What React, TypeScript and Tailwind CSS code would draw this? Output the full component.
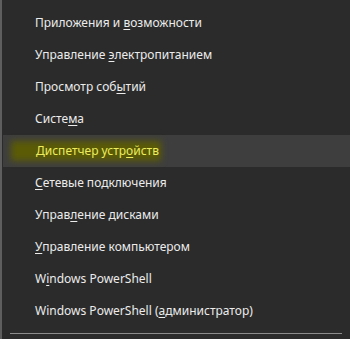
const items: { pre: string; key: string; post: string; active?: boolean }[] = [
  { pre: 'Приложения и ', key: 'в', post: 'озможности' },
  { pre: 'Управление ', key: 'э', post: 'лектропитанием' },
  { pre: 'Просмотр соб', key: 'ы', post: 'тий' },
  { pre: 'Систе', key: 'м', post: 'а' },
  { pre: 'Диспетчер устр', key: 'о', post: 'йств', active: true },
  { pre: '', key: 'С', post: 'етевые подключения' },
  { pre: 'Управ', key: 'л', post: 'ение дисками' },
  { pre: '', key: 'У', post: 'правление компьютером' },
  { pre: 'W', key: 'i', post: 'ndows PowerShell' },
  { pre: 'Windows PowerShell (', key: 'а', post: 'дминистратор)' },
];

export default function App() {
  return (
    <div className="w-[350px] h-[339px] bg-[#2b2b2b] border-l-2 border-[#5e5e5e] pt-[7px] overflow-hidden font-['Noto_Sans',sans-serif] text-[12px]">
      {items.map((it, i) => (
        <div
          key={i}
          className={
            'relative h-8 flex items-center pl-[33px] ' +
            (it.active ? 'bg-[#3e3e3e] ml-[1px] text-[#ecec5e]' : 'text-[#ececec]')
          }
        >
          {it.active && (
            <div className="absolute left-[8px] top-[6px] w-[150px] h-[20px] bg-[#5b5b06] blur-[3px]" />
          )}
          <span className="relative whitespace-nowrap">
            {it.pre}
            <span className="underline underline-offset-2">{it.key}</span>
            {it.post}
          </span>
        </div>
      ))}
      <div className="mt-[6px] ml-[8px] mr-[8px] h-px bg-[#8c8c8c]" />
    </div>
  );
}
